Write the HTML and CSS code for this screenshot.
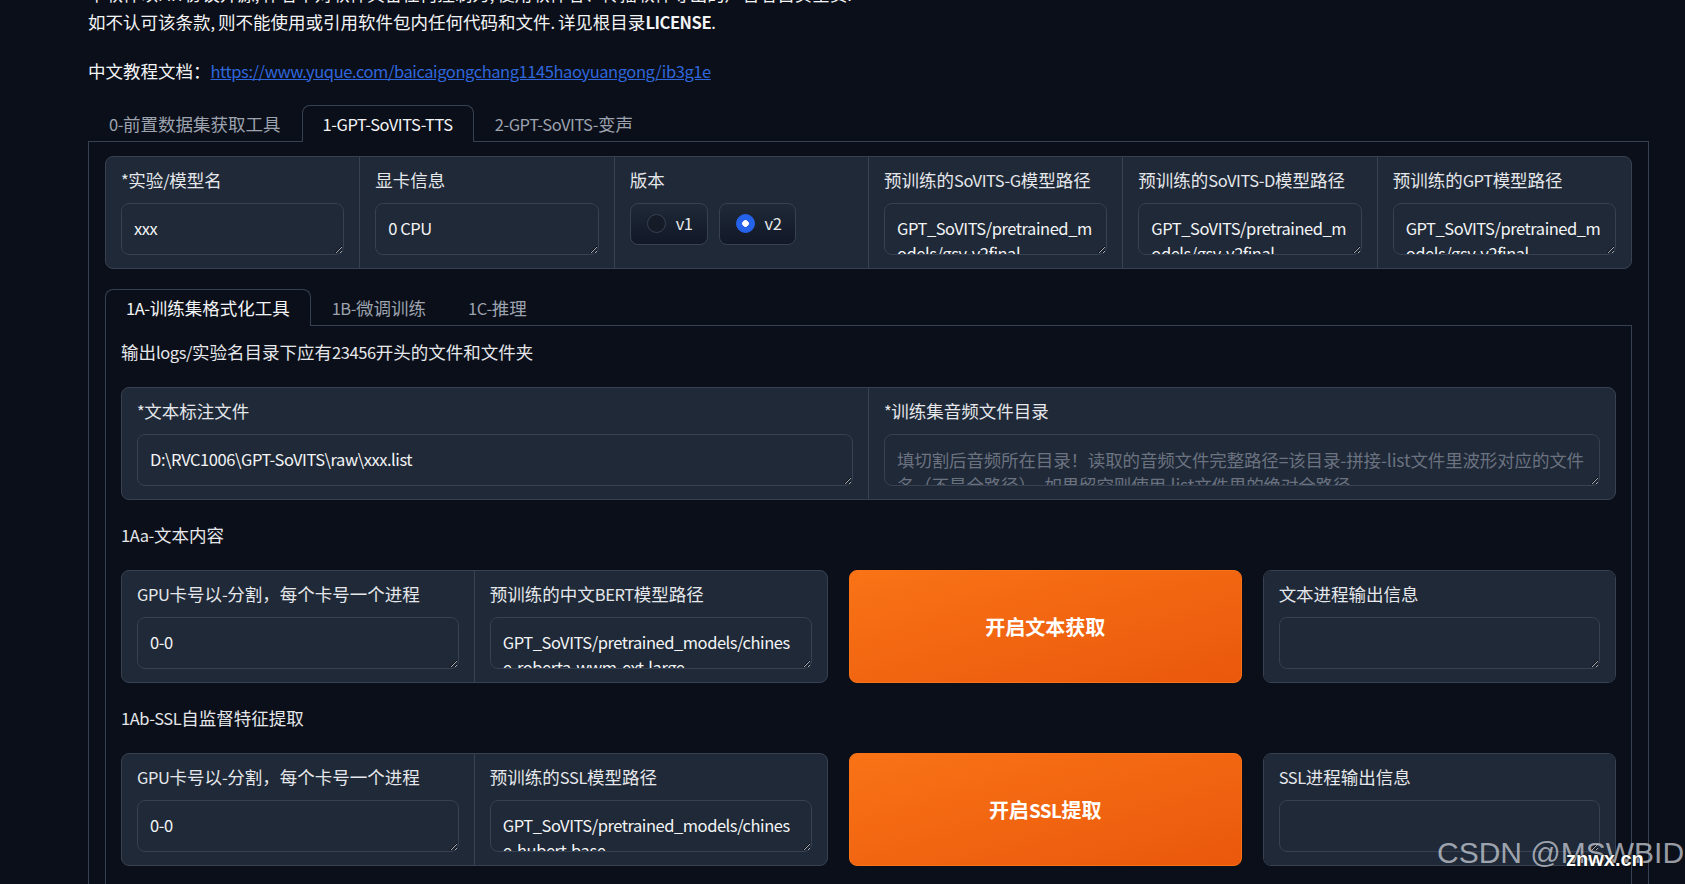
FILE: index.html
```html
<!DOCTYPE html>
<html lang="zh-CN">
<head>
  <meta charset="UTF-8" />
  <meta name="viewport" content="width=device-width, initial-scale=1.0" />
  <title>GPT-SoVITS WebUI</title>
  <link rel="stylesheet" href="styles.css">
</head>
<body>
<div class="page">
  <div class="prose">
    <p class="notice">本软件以<span class="en">MIT</span>协议开源<span class="en">, </span>作者不对软件具备任何控制力<span class="en">, </span>使用软件者、传播软件导出的声音者自负全责<span class="en">. </span><br>如不认可该条款<span class="en">, </span>则不能使用或引用软件包内任何代码和文件<span class="en">. </span>详见根目录<b class="en">LICENSE</b><span class="en">.</span></p>
    <p>中文教程文档：<a class="en" href="#">https://www.yuque.com/baicaigongchang1145haoyuangong/ib3g1e</a></p>
  </div>

  <div class="tabs outer-tabs">
    <div class="tab-nav">
      <button class="tab"><span class="en">0-</span>前置数据集获取工具</button>
      <button class="tab selected"><span class="en">1-GPT-SoVITS-TTS</span></button>
      <button class="tab"><span class="en">2-GPT-SoVITS-</span>变声</button>
    </div>
    <div class="tab-panel outer">
      <div class="form cols-6">
        <label class="field">
          <span class="label"><span class="en">*</span>实验<span class="en">/</span>模型名</span>
          <textarea rows="1">xxx</textarea>
        </label>
        <label class="field">
          <span class="label">显卡信息</span>
          <textarea rows="1">0 CPU</textarea>
        </label>
        <div class="field">
          <span class="label">版本</span>
          <div class="radio-group">
            <label class="radio"><input type="radio" name="version" value="v1"><span class="en">v1</span></label>
            <label class="radio"><input type="radio" name="version" value="v2" checked><span class="en">v2</span></label>
          </div>
        </div>
        <label class="field">
          <span class="label">预训练的<span class="en">SoVITS-G</span>模型路径</span>
          <textarea rows="1">GPT_SoVITS/pretrained_models/gsv-v2final-pretrained/s2G2333k.pth</textarea>
        </label>
        <label class="field">
          <span class="label">预训练的<span class="en">SoVITS-D</span>模型路径</span>
          <textarea rows="1">GPT_SoVITS/pretrained_models/gsv-v2final-pretrained/s2D2333k.pth</textarea>
        </label>
        <label class="field">
          <span class="label">预训练的<span class="en">GPT</span>模型路径</span>
          <textarea rows="1">GPT_SoVITS/pretrained_models/gsv-v2final-pretrained/s1bert25hz-5kh-longer-epoch=12-step=369668.ckpt</textarea>
        </label>
      </div>

      <div class="tabs inner-tabs">
        <div class="tab-nav">
          <button class="tab selected"><span class="en">1A-</span>训练集格式化工具</button>
          <button class="tab"><span class="en">1B-</span>微调训练</button>
          <button class="tab"><span class="en">1C-</span>推理</button>
        </div>
        <div class="tab-panel inner">
          <div class="md">输出<span class="en">logs/</span>实验名目录下应有<span class="en">23456</span>开头的文件和文件夹</div>

          <div class="form cols-2">
            <label class="field">
              <span class="label"><span class="en">*</span>文本标注文件</span>
              <textarea rows="1">D:\RVC1006\GPT-SoVITS\raw\xxx.list</textarea>
            </label>
            <label class="field">
              <span class="label"><span class="en">*</span>训练集音频文件目录</span>
              <textarea rows="1" class="cjk" placeholder="填切割后音频所在目录！读取的音频文件完整路径=该目录-拼接-list文件里波形对应的文件名（不是全路径）。如果留空则使用.list文件里的绝对全路径。"></textarea>
            </label>
          </div>

          <div class="md"><span class="en">1Aa-</span>文本内容</div>
          <div class="row">
            <div class="form cols-2">
              <label class="field">
                <span class="label"><span class="en">GPU</span>卡号以<span class="en">-</span>分割，每个卡号一个进程</span>
                <textarea rows="1">0-0</textarea>
              </label>
              <label class="field">
                <span class="label">预训练的中文<span class="en">BERT</span>模型路径</span>
                <textarea rows="1">GPT_SoVITS/pretrained_models/chinese-roberta-wwm-ext-large</textarea>
              </label>
            </div>
            <button class="primary">开启文本获取</button>
            <div class="form cols-1">
              <label class="field">
                <span class="label">文本进程输出信息</span>
                <textarea rows="1"></textarea>
              </label>
            </div>
          </div>

          <div class="md"><span class="en">1Ab-SSL</span>自监督特征提取</div>
          <div class="row">
            <div class="form cols-2">
              <label class="field">
                <span class="label"><span class="en">GPU</span>卡号以<span class="en">-</span>分割，每个卡号一个进程</span>
                <textarea rows="1">0-0</textarea>
              </label>
              <label class="field">
                <span class="label">预训练的<span class="en">SSL</span>模型路径</span>
                <textarea rows="1">GPT_SoVITS/pretrained_models/chinese-hubert-base</textarea>
              </label>
            </div>
            <button class="primary">开启<span class="en">SSL</span>提取</button>
            <div class="form cols-1">
              <label class="field">
                <span class="label"><span class="en">SSL</span>进程输出信息</span>
                <textarea rows="1"></textarea>
              </label>
            </div>
          </div>

          <div class="md"><span class="en">1Ac-</span>语义<span class="en">token</span>提取</div>
          <div class="row">
            <div class="form cols-2">
              <label class="field">
                <span class="label"><span class="en">GPU</span>卡号以<span class="en">-</span>分割，每个卡号一个进程</span>
                <textarea rows="1">0-0</textarea>
              </label>
              <label class="field">
                <span class="label">预训练的<span class="en">GPT</span>模型路径</span>
                <textarea rows="1">GPT_SoVITS/pretrained_models/gsv-v2final-pretrained/s1bert25hz-5kh-longer-epoch=12-step=369668.ckpt</textarea>
              </label>
            </div>
            <button class="primary">开启语义<span class="en">token</span>提取</button>
            <div class="form cols-1">
              <label class="field">
                <span class="label">语义<span class="en">token</span>提取进程输出信息</span>
                <textarea rows="1"></textarea>
              </label>
            </div>
          </div>
        </div>
      </div>
    </div>
  </div>
</div>

<div class="watermark">CSDN @MSWBID</div>
<div class="watermark-site">znwx.cn</div>
</body>
</html>
```

FILE: styles.css
```css
:root {
  --bg: #0b0f19;
  --block: #1f2937;
  --border: #374151;
  --text: #f3f4f6;
  --label: #e5e7eb;
  --muted: #9ca3af;
  --orange: #f97316;
  --orange-dark: #ea580c;
  color-scheme: dark;
}
* {
  box-sizing: border-box;
}
html, body {
  margin: 0;
  padding: 0;
  overflow: hidden;
  background-color: var(--bg);
  color: var(--text);
  font-family: "Noto Sans CJK SC", "Noto Sans", sans-serif;
  font-size: 17.5px;
  line-height: 25px;
}
.page {
  width: 1561px;
  margin-left: 88px;
}

/* latin runs are set a little narrower than the CJK text */
.en {
  font-size: 0.943em;
  letter-spacing: -0.026em;
}

/* markdown header */
.prose {
  margin-top: -20px;
}
.prose p {
  margin: 0;
}
.prose .notice {
  line-height: 27px;
}
.prose p + p {
  margin-top: 21.5px;
}
.prose a {
  color: #2f66dc;
}
.outer-tabs {
  margin-top: 21px;
}

/* tabs */
.tab-nav {
  display: flex;
  border-bottom: 1px solid var(--border);
}
.tab {
  height: 37px;
  margin-bottom: -1px;
  padding: 0 20px;
  border: 1px solid transparent;
  border-bottom: none;
  border-radius: 8px 8px 0 0;
  background: none;
  color: var(--muted);
  font: inherit;
  cursor: pointer;
}
.tab.selected {
  border-color: var(--border);
  background: var(--bg);
  color: var(--text);
}
.tab-panel {
  display: flex;
  flex-direction: column;
  border: 1px solid var(--border);
  border-top: none;
}
.tab-panel.outer {
  padding: 14px 16px 0;
  gap: 20px;
}
.tab-panel.inner {
  padding: 13px 15px 40px;
  gap: 22px;
}
.md {
  color: var(--label);
}

/* blocks */
.form {
  display: grid;
  gap: 1px;
  background: var(--border);
  border: 1px solid var(--border);
  border-radius: 8px;
  overflow: hidden;
}
.cols-6 { grid-template-columns: repeat(6, 1fr); }
.cols-2 { grid-template-columns: repeat(2, 1fr); }
.cols-1 { grid-template-columns: 1fr; }
.field {
  display: flex;
  flex-direction: column;
  min-width: 0;
  padding: 12px 15px 13px;
  background: var(--block);
}
.label {
  display: block;
  margin-bottom: 12px;
  line-height: 22px;
  color: var(--label);
  white-space: nowrap;
}
textarea {
  display: block;
  width: 100%;
  height: 52px;
  padding: 12px;
  border: 1px solid var(--border);
  border-radius: 8px;
  background: var(--block);
  color: var(--text);
  font: inherit;
  font-size: 16.5px;
  letter-spacing: -0.45px;
  line-height: 25px;
  resize: vertical;
  overflow: hidden;
  outline: none;
}
.row textarea {
  padding-right: 14px;
}
textarea.cjk {
  font-size: 17.5px;
  letter-spacing: -0.15px;
}
textarea::placeholder {
  color: #6b7280;
}

/* radio */
.radio-group {
  display: flex;
  gap: 11px;
}
.radio {
  display: flex;
  align-items: center;
  gap: 10px;
  height: 42px;
  padding: 0 14px 0 16px;
  border: 1px solid var(--border);
  border-radius: 8px;
  background: linear-gradient(to top, #111827, #1f2937);
  color: var(--label);
}
.radio input {
  appearance: none;
  width: 19px;
  height: 19px;
  margin: 0;
  border: 1px solid var(--border);
  border-radius: 50%;
  background: #151c28;
}
.radio input:checked {
  border-color: #2563eb;
  background: #2563eb radial-gradient(circle, #fff 3px, transparent 3.6px);
}

/* rows with button */
.row {
  display: grid;
  grid-template-columns: 2fr 1.113fr 1fr;
  gap: 20.8px;
}
.primary {
  border: 1px solid var(--orange);
  border-radius: 8px;
  background: linear-gradient(to bottom right, var(--orange), var(--orange-dark));
  color: #fff;
  font: inherit;
  font-size: 20px;
  font-weight: 700;
  cursor: pointer;
}

/* image watermark */
.watermark {
  position: absolute;
  left: 1437px;
  top: 838px;
  font: 30px/30px "Liberation Sans", Arial, sans-serif;
  color: rgba(215, 219, 226, 0.7);
  white-space: nowrap;
}
.watermark-site {
  position: absolute;
  left: 1566px;
  top: 849px;
  font: 700 20px/20px "Liberation Sans", Arial, sans-serif;
  color: #fff;
  text-shadow: 0 0 2px #000, 0 0 1px #000;
}
```
